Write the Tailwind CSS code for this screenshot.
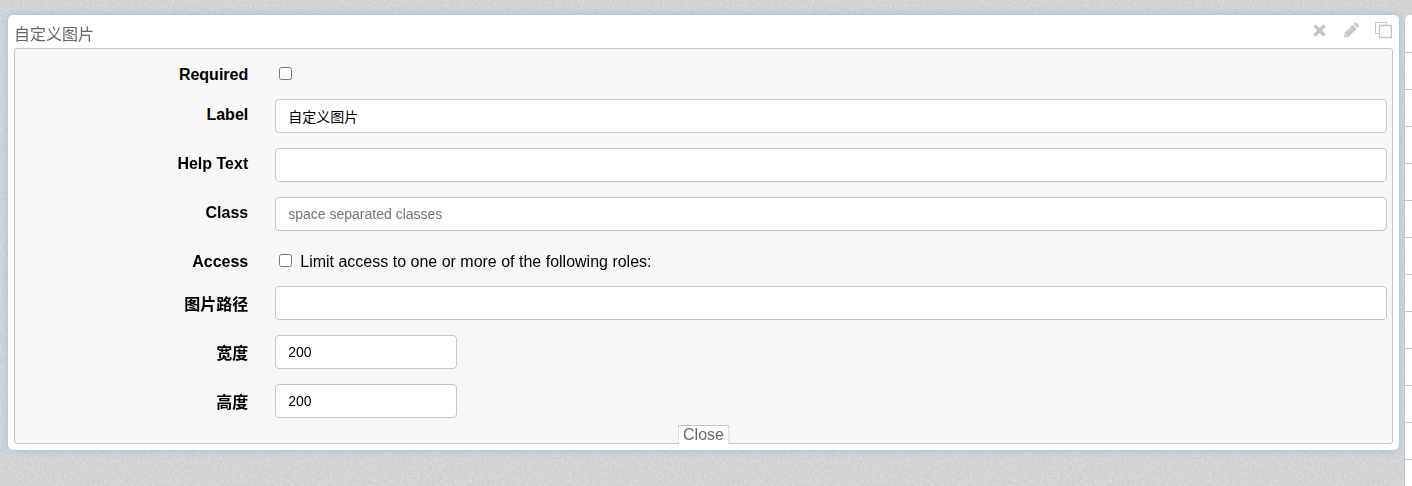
<!DOCTYPE html>
<html lang="zh-CN">
  <head>
    <meta charset="UTF-8" />
    <meta name="viewport" content="width=device-width, initial-scale=1.0" />
    <script src="https://cdn.jsdelivr.net/npm/@tailwindcss/browser@4"></script>
    <title>自定义图片</title>
  </head>
  <body class="min-h-screen overflow-hidden bg-[#d3d3d3] font-['Liberation_Sans','Noto_Sans_CJK_SC',sans-serif] text-base text-black">
    <!-- paper grain -->
    <svg class="fixed inset-0 -z-10 h-full w-full" aria-hidden="true">
      <filter id="grain" color-interpolation-filters="sRGB">
        <feTurbulence type="fractalNoise" baseFrequency="0.4" numOctaves="2" seed="4" />
        <feColorMatrix values="0.09 0 0 0 0.785  0.09 0 0 0 0.785  0.09 0 0 0 0.785  0 0 0 0 1" />
      </filter>
      <rect width="100%" height="100%" filter="url(#grain)" />
    </svg>

    <div class="flex h-screen items-start gap-[5px] pt-[15px] pl-2">
      <main class="min-w-0 flex-1 rounded-[5px] bg-white px-1.5 pb-1.5 shadow-[0_0_8px_#94bfe3]">
        <div class="flex h-[33px] items-start justify-between">
          <h1 class="pt-2 leading-6 text-[#666]">自定义图片</h1>
          <div class="flex items-center gap-[14px] pt-1.5 pr-px text-[#c5c5c5]">
            <button type="button" aria-label="Remove">
              <svg class="h-[18px] w-[18px]" viewBox="0 0 18 18" stroke="currentColor" stroke-width="3.4">
                <path d="M4.500 4.500l10 10M14.500 4.500l-10 10" />
              </svg>
            </button>
            <button type="button" aria-label="Edit">
              <svg class="h-[18px] w-[18px]" viewBox="0 0 18 18" fill="currentColor">
                <path d="M2 16.500l.8-4.700 7.900-7.900 3.900 3.900-7.900 7.900zM11.500 3.100l1.200-1.200q.9-.8 1.800 0l2.100 2.100q.8.900 0 1.800l-1.200 1.200z" />
                <path d="M3.600 13.200l1.700 1.700" fill="none" stroke="#fff" stroke-width="1" />
                <path d="M6 11l4.500-4.500" fill="none" stroke="#fff" stroke-width=".6" />
              </svg>
            </button>
            <button type="button" aria-label="Duplicate">
              <svg class="h-[18px] w-[18px]" viewBox="0 0 18 18" fill="none" stroke="currentColor">
                <path d="M4.500 12.500h-3v-11h11v3" />
                <path d="M5.500 4.500h12v12h-12z" stroke-width="1.300" />
              </svg>
            </button>
          </div>
        </div>

        <form class="relative flex flex-col gap-[15px] rounded-[3px] border border-[#c5c5c5] bg-[#f7f7f7] pt-[10px] pr-[5px] pb-[25px]">
          <div class="flex h-[25px] gap-[27px]">
            <label for="required" class="w-[17%] shrink-0 pt-1 text-right leading-6 font-bold">Required</label>
            <div class="flex items-start pt-2 pl-1">
              <input id="required" type="checkbox" class="h-[13px] w-[13px]" />
            </div>
          </div>
          <div class="flex gap-[27px]">
            <label for="label" class="w-[17%] shrink-0 pt-1 text-right leading-6 font-bold">Label</label>
            <input id="label" type="text" value="自定义图片" class="h-[34px] min-w-0 flex-1 rounded-[4px] border border-[#c5c5c5] bg-white px-3 text-sm" />
          </div>
          <div class="flex gap-[27px]">
            <label for="help" class="w-[17%] shrink-0 pt-1 text-right leading-6 font-bold">Help Text</label>
            <input id="help" type="text" class="h-[34px] min-w-0 flex-1 rounded-[4px] border border-[#c5c5c5] bg-white px-3 text-sm" />
          </div>
          <div class="flex gap-[27px]">
            <label for="class" class="w-[17%] shrink-0 pt-1 text-right leading-6 font-bold">Class</label>
            <input id="class" type="text" placeholder="space separated classes" class="h-[34px] min-w-0 flex-1 rounded-[4px] border border-[#c5c5c5] bg-white px-3 text-sm placeholder:text-[#757575]" />
          </div>
          <div class="flex h-[25px] gap-[27px]">
            <span class="w-[17%] shrink-0 pt-1 text-right leading-6 font-bold">Access</span>
            <div class="flex items-start gap-2 pl-1">
              <input id="access" type="checkbox" class="mt-2 h-[13px] w-[13px]" />
              <label for="access" class="pt-1 leading-6">Limit access to one or more of the following roles:</label>
            </div>
          </div>
          <div class="flex gap-[27px]">
            <label for="path" class="w-[17%] shrink-0 pt-[7px] text-right leading-6 font-bold">图片路径</label>
            <input id="path" type="text" class="h-[34px] min-w-0 flex-1 rounded-[4px] border border-[#c5c5c5] bg-white px-3 text-sm" />
          </div>
          <div class="flex gap-[27px]">
            <label for="width" class="w-[17%] shrink-0 pt-[7px] text-right leading-6 font-bold">宽度</label>
            <input id="width" type="text" value="200" class="h-[34px] w-[182px] rounded-[4px] border border-[#c5c5c5] bg-white px-3 text-sm" />
          </div>
          <div class="flex gap-[27px]">
            <label for="height" class="w-[17%] shrink-0 pt-[7px] text-right leading-6 font-bold">高度</label>
            <input id="height" type="text" value="200" class="h-[34px] w-[182px] rounded-[4px] border border-[#c5c5c5] bg-white px-3 text-sm" />
          </div>
          <!-- tab sits over the bottom border -->
          <button type="button" class="absolute -bottom-px left-1/2 h-[19px] -translate-x-1/2 rounded-t-[3px] border border-b-0 border-[#c5c5c5] bg-white px-[5px] leading-4 text-[#666]">Close</button>
        </form>
      </main>

      <!-- field list, cut off by the window edge -->
      <ul class="h-full w-2 shrink-0 overflow-hidden rounded-tl-[5px] border-l border-[#c5c5c5] bg-white">
        <li class="h-[38px] border-b border-[#c5c5c5]"></li>
        <li class="h-[37px] border-b border-[#c5c5c5]"></li>
        <li class="h-[37px] border-b border-[#c5c5c5]"></li>
        <li class="h-[37px] border-b border-[#c5c5c5]"></li>
        <li class="h-[37px] border-b border-[#c5c5c5]"></li>
        <li class="h-[37px] border-b border-[#c5c5c5]"></li>
        <li class="h-[37px] border-b border-[#c5c5c5]"></li>
        <li class="h-[37px] border-b border-[#c5c5c5]"></li>
        <li class="h-[37px] border-b border-[#c5c5c5]"></li>
        <li class="h-[37px] border-b border-[#c5c5c5]"></li>
        <li class="h-[37px] border-b border-[#c5c5c5]"></li>
        <li class="h-[37px] border-b border-[#c5c5c5]"></li>
      </ul>
    </div>
  </body>
</html>
